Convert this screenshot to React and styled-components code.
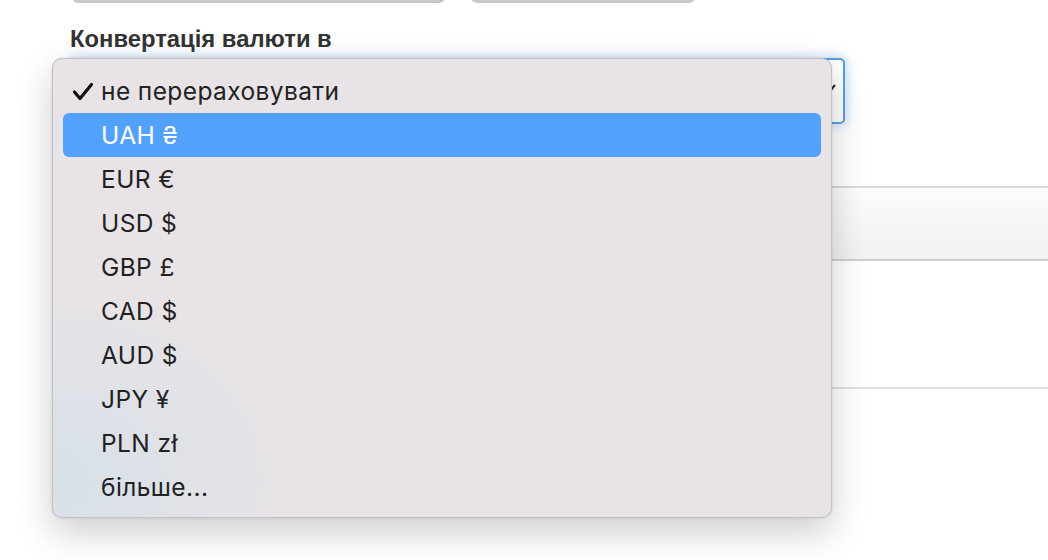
import styled, { createGlobalStyle } from 'styled-components';

const GlobalStyle = createGlobalStyle`
    html, body {
        margin: 0;
        padding: 0;
        background: #fff;
        overflow: hidden;
    }
    body {
        font-family: "Liberation Sans", Arial, sans-serif;
        color: #333;
    }
`;

const Page = styled.main`
    position: relative;
    width: 1048px;
    height: 560px;
    overflow: hidden;
`;

const Form = styled.section`
    padding: 0 0 0 72px;
`;

const InputRow = styled.div`
    display: flex;
    gap: 26px;
    margin-top: -37px;
`;

const TextInput = styled.div`
    width: ${(p) => p.w}px;
    height: 40px;
    border: 1px solid #d6d6d6;
    border-bottom: 3px solid #c9c9c9;
    border-radius: 6px;
    box-sizing: border-box;
`;

const Label = styled.label`
    display: block;
    margin: 22px 0 0 -2px;
    font-size: 23.8px;
    font-weight: 700;
    color: #333;
    line-height: 28px;
`;

const Select = styled.div`
    position: relative;
    width: 773px;
    height: 66px;
    margin-top: 5px;
    border: 2px solid #5a9ede;
    border-radius: 5px;
    box-sizing: border-box;
    box-shadow: 0 0 10px 3px rgba(120, 175, 230, 0.35);
`;

const Chevron = styled.svg`
    position: absolute;
    right: 6px;
    top: 23px;
`;

const Table = styled.div`
    margin-top: 62px;
`;

const TableHead = styled.div`
    height: 71px;
    border-top: 2px solid #d9d9d9;
    border-bottom: 2px solid #cfcfcf;
    background: linear-gradient(#fcfcfc, #f0f1f3);
`;

const TableRow = styled.div`
    height: 126px;
    border-bottom: 2px solid #e0e0e0;
`;

const Menu = styled.ul`
    position: absolute;
    left: 52px;
    top: 58px;
    width: 780px;
    height: 460px;
    margin: 0;
    padding: 10px 10px 9px;
    box-sizing: border-box;
    list-style: none;
    border-radius: 10px;
    border: 1px solid #c4c0c3;
    background:
        radial-gradient(ellipse 240px 190px at 0% 92%, rgba(210, 224, 232, 0.8), rgba(210, 224, 232, 0) 100%),
        #e8e3e7;
    box-shadow: 0 14px 36px rgba(0, 0, 0, 0.2), 0 0 2px rgba(0, 0, 0, 0.15);
    font-family: Inter, "Noto Sans", sans-serif;
`;

const Item = styled.li`
    position: relative;
    height: 44px;
    display: flex;
    align-items: center;
    padding-left: 38px;
    border-radius: 6px;
    font-size: 24.5px;
    letter-spacing: 0.4px;
    color: ${(p) => (p.active ? '#fff' : '#222')};
    background: ${(p) => (p.active ? '#52a2fd' : 'transparent')};
`;

const Check = styled.svg`
    position: absolute;
    left: 9px;
    top: 13px;
`;

const options = [
    'не перераховувати',
    'UAH ₴',
    'EUR €',
    'USD $',
    'GBP £',
    'CAD $',
    'AUD $',
    'JPY ¥',
    'PLN zł',
    'більше...',
];

export default function App() {
    return (
        <Page>
            <GlobalStyle />
            <Form>
                <InputRow>
                    <TextInput w={373} />
                    <TextInput w={224} />
                </InputRow>
                <Label>Конвертація валюти в</Label>
                <Select>
                    <Chevron width="14" height="10" viewBox="0 0 14 10">
                        <path d="M2 2 L7 8 L12 2" fill="none" stroke="#333" strokeWidth="2.2" />
                    </Chevron>
                </Select>
                <Table>
                    <TableHead />
                    <TableRow />
                </Table>
            </Form>
            <Menu>
                {options.map((value, key) => (
                    <Item key={key} active={key === 1}>
                        {key === 0 && (
                            <Check width="22" height="19" viewBox="0 0 22 19">
                                <path d="M2.5 10 L8 16.5 L19.5 2.5" fill="none" stroke="#111" strokeWidth="3.2" strokeLinecap="round" strokeLinejoin="round" />
                            </Check>
                        )}
                        {value}
                    </Item>
                ))}
            </Menu>
        </Page>
    );
}
